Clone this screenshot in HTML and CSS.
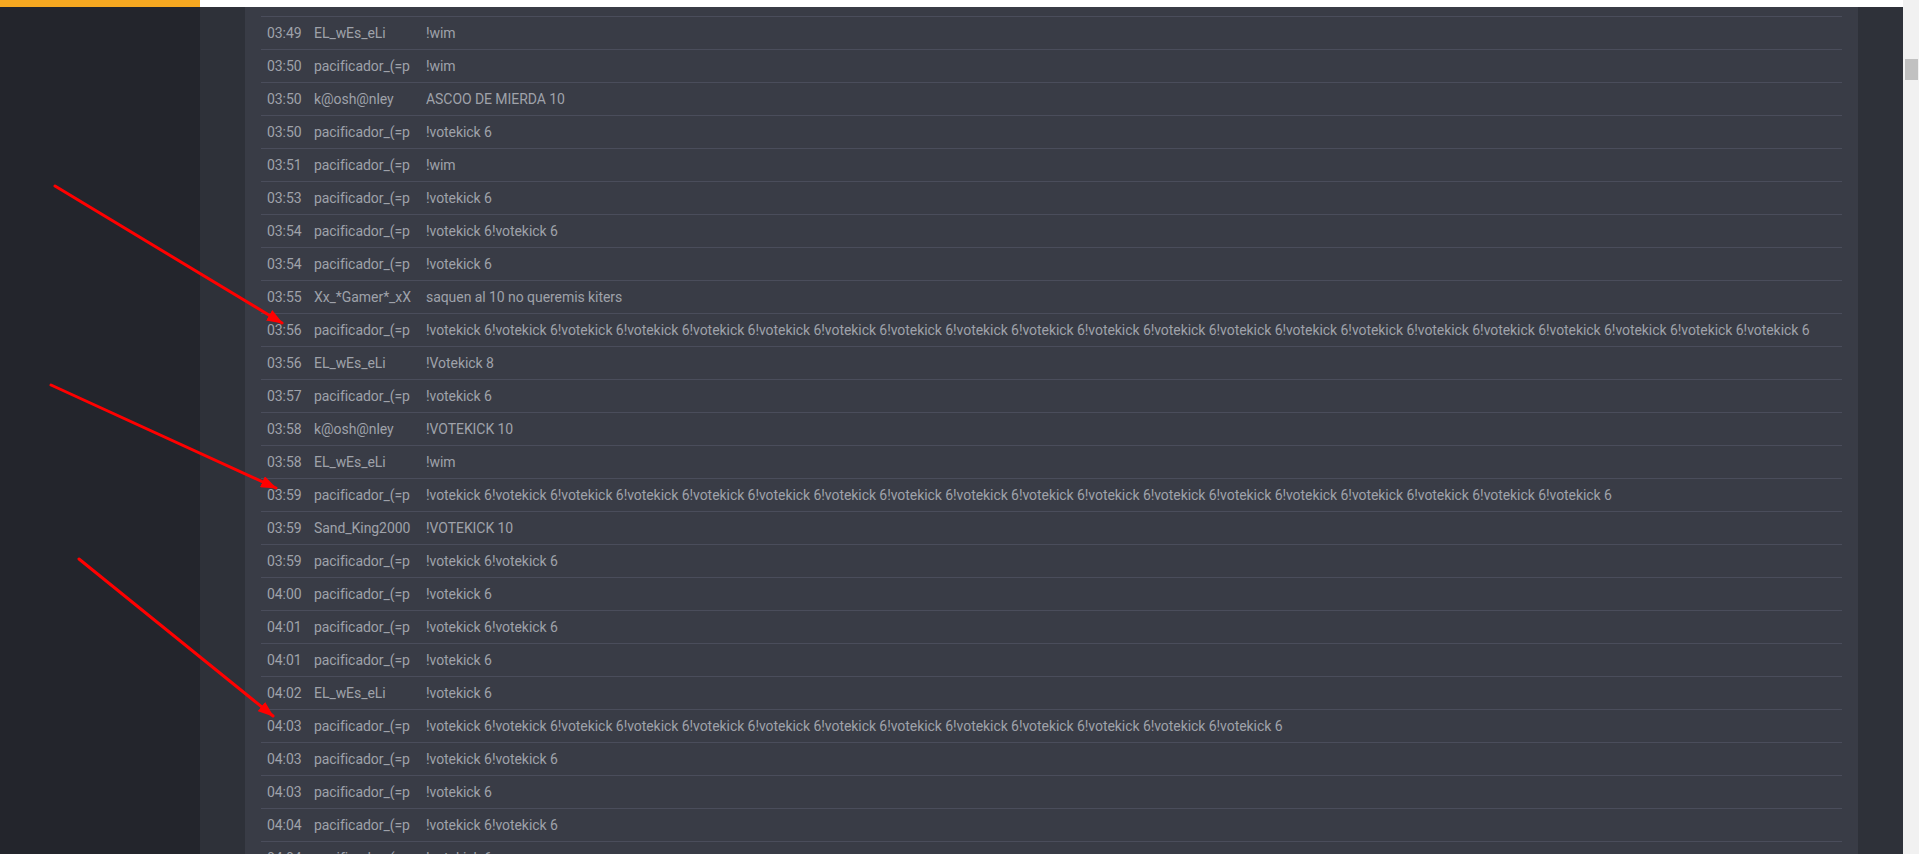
FILE: index.html
```html
<!DOCTYPE html>
<html lang="es">
<head>
  <meta charset="UTF-8">
  <meta name="viewport" content="width=device-width, initial-scale=1">
  <title>Chat log</title>
  <link rel="stylesheet" href="styles.css">
</head>
<body>
  <div class="page">
    <div class="column">
      <div class="topbar">
        <div class="topbar-accent"></div>
        <div class="topbar-rest"></div>
      </div>
      <div class="layout">
        <aside class="sidebar"></aside>
        <main class="main">
          <div class="panel">
            <div class="row"><span class="time">03:48</span><span class="name">EL_wEs_eLi</span><span class="msg">!wim</span></div>
            <div class="row"><span class="time">03:49</span><span class="name">EL_wEs_eLi</span><span class="msg">!wim</span></div>
            <div class="row"><span class="time">03:50</span><span class="name">pacificador_(=p</span><span class="msg">!wim</span></div>
            <div class="row"><span class="time">03:50</span><span class="name">k@osh@nley</span><span class="msg">ASCOO DE MIERDA 10</span></div>
            <div class="row"><span class="time">03:50</span><span class="name">pacificador_(=p</span><span class="msg">!votekick 6</span></div>
            <div class="row"><span class="time">03:51</span><span class="name">pacificador_(=p</span><span class="msg">!wim</span></div>
            <div class="row"><span class="time">03:53</span><span class="name">pacificador_(=p</span><span class="msg">!votekick 6</span></div>
            <div class="row"><span class="time">03:54</span><span class="name">pacificador_(=p</span><span class="msg">!votekick 6!votekick 6</span></div>
            <div class="row"><span class="time">03:54</span><span class="name">pacificador_(=p</span><span class="msg">!votekick 6</span></div>
            <div class="row"><span class="time">03:55</span><span class="name">Xx_*Gamer*_xX</span><span class="msg">saquen al 10 no queremis kiters</span></div>
            <div class="row"><span class="time">03:56</span><span class="name">pacificador_(=p</span><span class="msg">!votekick 6!votekick 6!votekick 6!votekick 6!votekick 6!votekick 6!votekick 6!votekick 6!votekick 6!votekick 6!votekick 6!votekick 6!votekick 6!votekick 6!votekick 6!votekick 6!votekick 6!votekick 6!votekick 6!votekick 6!votekick 6</span></div>
            <div class="row"><span class="time">03:56</span><span class="name">EL_wEs_eLi</span><span class="msg">!Votekick 8</span></div>
            <div class="row"><span class="time">03:57</span><span class="name">pacificador_(=p</span><span class="msg">!votekick 6</span></div>
            <div class="row"><span class="time">03:58</span><span class="name">k@osh@nley</span><span class="msg">!VOTEKICK 10</span></div>
            <div class="row"><span class="time">03:58</span><span class="name">EL_wEs_eLi</span><span class="msg">!wim</span></div>
            <div class="row"><span class="time">03:59</span><span class="name">pacificador_(=p</span><span class="msg">!votekick 6!votekick 6!votekick 6!votekick 6!votekick 6!votekick 6!votekick 6!votekick 6!votekick 6!votekick 6!votekick 6!votekick 6!votekick 6!votekick 6!votekick 6!votekick 6!votekick 6!votekick 6</span></div>
            <div class="row"><span class="time">03:59</span><span class="name">Sand_King2000</span><span class="msg">!VOTEKICK 10</span></div>
            <div class="row"><span class="time">03:59</span><span class="name">pacificador_(=p</span><span class="msg">!votekick 6!votekick 6</span></div>
            <div class="row"><span class="time">04:00</span><span class="name">pacificador_(=p</span><span class="msg">!votekick 6</span></div>
            <div class="row"><span class="time">04:01</span><span class="name">pacificador_(=p</span><span class="msg">!votekick 6!votekick 6</span></div>
            <div class="row"><span class="time">04:01</span><span class="name">pacificador_(=p</span><span class="msg">!votekick 6</span></div>
            <div class="row"><span class="time">04:02</span><span class="name">EL_wEs_eLi</span><span class="msg">!votekick 6</span></div>
            <div class="row"><span class="time">04:03</span><span class="name">pacificador_(=p</span><span class="msg">!votekick 6!votekick 6!votekick 6!votekick 6!votekick 6!votekick 6!votekick 6!votekick 6!votekick 6!votekick 6!votekick 6!votekick 6!votekick 6</span></div>
            <div class="row"><span class="time">04:03</span><span class="name">pacificador_(=p</span><span class="msg">!votekick 6!votekick 6</span></div>
            <div class="row"><span class="time">04:03</span><span class="name">pacificador_(=p</span><span class="msg">!votekick 6</span></div>
            <div class="row"><span class="time">04:04</span><span class="name">pacificador_(=p</span><span class="msg">!votekick 6!votekick 6</span></div>
            <div class="row"><span class="time">04:04</span><span class="name">pacificador_(=p</span><span class="msg">!votekick 6</span></div>
          </div>
        </main>
      </div>
    </div>
    <div class="scrollbar">
      <div class="scroll-thumb"></div>
    </div>
  </div>

  <!-- flechas de anotación encima de la captura -->
  <svg class="arrows" width="1919" height="854" viewBox="0 0 1919 854">
    <defs>
      <marker id="head" markerUnits="userSpaceOnUse" markerWidth="16" markerHeight="12" refX="15" refY="6" orient="auto">
        <path d="M0,0 L16,6 L0,12 z" fill="#ff0000"/>
      </marker>
    </defs>
    <line x1="55" y1="186" x2="282" y2="323" marker-end="url(#head)"/>
    <line x1="51" y1="385" x2="276" y2="488" marker-end="url(#head)"/>
    <line x1="79" y1="559" x2="273" y2="716" marker-end="url(#head)"/>
  </svg>
</body>
</html>
```

FILE: styles.css
```css
body {
  margin: 0;
  padding: 0;
  background: #2e3139;
  font-family: Roboto, "Liberation Sans", sans-serif;
  overflow: hidden;
}
.page {
  display: flex;
  height: 854px;
}
.column {
  flex: 1;
  display: flex;
  flex-direction: column;
  min-width: 0;
}
.topbar {
  display: flex;
  height: 7px;
  flex-shrink: 0;
}
.topbar-accent {
  width: 200px;
  background: #f6a821;
}
.topbar-rest {
  flex: 1;
  background: #fff;
}
.layout {
  flex: 1;
  display: flex;
  min-height: 0;
}
.sidebar {
  width: 200px;
  background: #23252c;
  flex-shrink: 0;
}
.main {
  flex: 1;
  background: #2e3139;
  padding: 0 45px;
  overflow: hidden;
}
.panel {
  background: #393c46;
  padding: 0 16px;
  margin-top: -23px;
  min-height: 900px;
}
.row {
  display: grid;
  grid-template-columns: 47px 112px 1fr;
  align-items: center;
  height: 32px;
  padding-left: 6px;
  border-bottom: 1px solid #4a4d5b;
  font-size: 14px;
  letter-spacing: -0.06px;
  color: #9fa2aa;
  white-space: nowrap;
}
.name {
  overflow: hidden;
}
.msg {
  overflow: hidden;
}
.scrollbar {
  width: 16px;
  background: #f1f1f1;
  flex-shrink: 0;
}
.scroll-thumb {
  margin: 59px 1px 0 2px;
  height: 21px;
  background: #c1c1c1;
}
.arrows {
  position: absolute;
  top: 0;
  left: 0;
  pointer-events: none;
}
.arrows line {
  stroke: #ff0000;
  stroke-width: 3;
  stroke-linecap: round;
}
```
